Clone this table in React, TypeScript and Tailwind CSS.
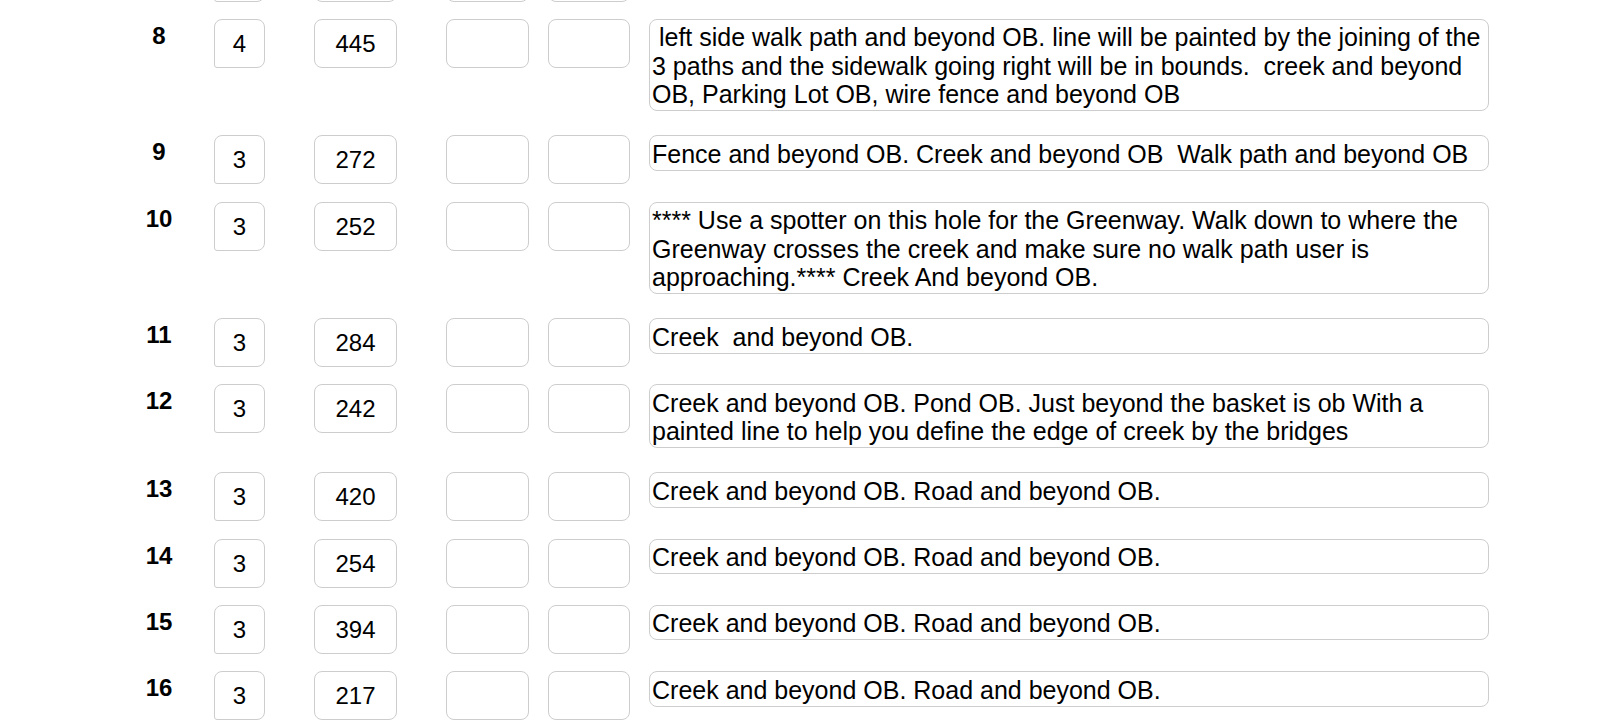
import React from "react";

type Hole = {
  n: number;
  par: string;
  dist: string;
  notes: string[];
  peek?: boolean;
};

// row 7 only shows the bottom edge of its boxes at the top of the viewport
const holes: Hole[] = [
  { n: 7, par: "", dist: "", notes: [""], peek: true },
  {
    n: 8,
    par: "4",
    dist: "445",
    notes: [
      " left side walk path and beyond OB. line will be painted by the joining of the",
      "3 paths and the sidewalk going right will be in bounds.  creek and beyond",
      "OB, Parking Lot OB, wire fence and beyond OB",
    ],
  },
  {
    n: 9,
    par: "3",
    dist: "272",
    notes: ["Fence and beyond OB. Creek and beyond OB  Walk path and beyond OB"],
  },
  {
    n: 10,
    par: "3",
    dist: "252",
    notes: [
      "**** Use a spotter on this hole for the Greenway. Walk down to where the",
      "Greenway crosses the creek and make sure no walk path user is",
      "approaching.**** Creek And beyond OB.",
    ],
  },
  { n: 11, par: "3", dist: "284", notes: ["Creek  and beyond OB."] },
  {
    n: 12,
    par: "3",
    dist: "242",
    notes: [
      "Creek and beyond OB. Pond OB. Just beyond the basket is ob With a",
      "painted line to help you define the edge of creek by the bridges",
    ],
  },
  { n: 13, par: "3", dist: "420", notes: ["Creek and beyond OB. Road and beyond OB."] },
  { n: 14, par: "3", dist: "254", notes: ["Creek and beyond OB. Road and beyond OB."] },
  { n: 15, par: "3", dist: "394", notes: ["Creek and beyond OB. Road and beyond OB."] },
  { n: 16, par: "3", dist: "217", notes: ["Creek and beyond OB. Road and beyond OB."] },
];

const boxBase =
  "h-[49px] mb-[17.3px] shrink-0 flex items-center justify-center rounded-[8px] border border-[#cdcdcd] bg-white pt-[1px] text-[24px] leading-none text-black";

const HoleRow: React.FC<{ hole: Hole }> = ({ hole }) => (
  <div className="flex items-start">
    <div className="ml-[134px] w-[50px] shrink-0 pt-[3px] text-center text-[24px] font-bold leading-[28px] text-black">
      {hole.peek ? "" : hole.n}
    </div>
    <div className={`${boxBase} ml-[30px] w-[51px] rounded-bl-[3px]`}>{hole.par}</div>
    <div className={`${boxBase} ml-[49px] w-[83px]`}>{hole.dist}</div>
    <div className={`${boxBase} ml-[49px] w-[83px]`} />
    <div className={`${boxBase} ml-[19px] w-[82px]`} />
    <div className="ml-[19px] mb-[24px] w-[840px] shrink-0 rounded-[8px] border border-[#cdcdcd] bg-white pl-[2px] pt-[3.5px] pb-[1.5px] text-[25px] leading-[28.5px] text-black">
      {hole.notes.map((line, i) => (
        <div key={i} className="whitespace-pre">
          {line || "\u00a0"}
        </div>
      ))}
    </div>
  </div>
);

export default function App() {
  return (
    <div className="h-[724px] w-[1620px] overflow-hidden bg-white font-['Liberation_Sans',Arial,sans-serif]">
      <div className="-mt-[47.5px]">
        {holes.map((h) => (
          <HoleRow key={h.n} hole={h} />
        ))}
      </div>
    </div>
  );
}
